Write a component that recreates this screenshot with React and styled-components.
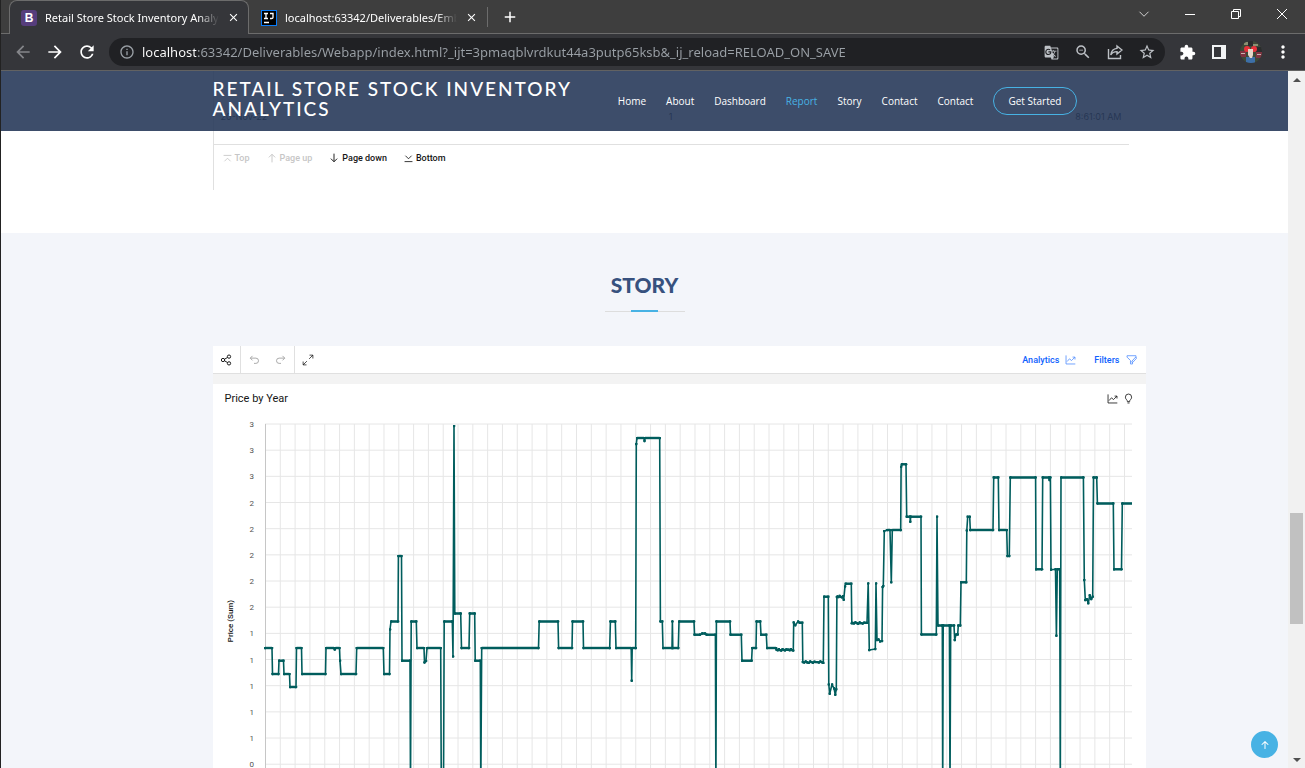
import React from "react";
import styled, { createGlobalStyle } from "styled-components";
import {
  MdArrowBack,
  MdArrowForward,
  MdRefresh,
  MdInfoOutline,
  MdGTranslate,
  MdZoomOut,
  MdStarBorder,
  MdExtension,
  MdMoreVert,
  MdClose,
  MdAdd,
} from "react-icons/md";
import { BsArrowUpShort } from "react-icons/bs";

const GlobalStyle = createGlobalStyle`
  * { box-sizing: border-box; }
  body { margin: 0; background: #fff; font-family: "Open Sans", sans-serif; }
  button { font: inherit; color: inherit; background: none; border: 0; padding: 0; }
  a { color: inherit; text-decoration: none; }
  svg { display: block; flex: none; }
`;

/* ---------- browser window ---------- */

const Window = styled.div`
  display: flex;
  flex-direction: column;
  height: 100vh;
  overflow: hidden;
  border-left: 1px solid #222;
`;

const TabStrip = styled.div`
  display: flex;
  flex: none;
  height: 34px;
  padding-left: 8px;
  background: #3e3e3e;
  box-shadow: inset 0 -1px #6c6c6c;
  color: #fff;
`;

const Tab = styled.div`
  display: flex;
  align-items: center;
  gap: 8px;
  flex: none;
  height: 34px;
  width: ${(p) => (p.$active ? 240 : 238)}px;
  padding: 0 9px 0 11px;
  border: 1px solid ${(p) => (p.$active ? "#6c6c6c" : "transparent")};
  border-bottom: 0;
  border-radius: 8px 8px 0 0;
  background: ${(p) => (p.$active ? "#35363a" : "transparent")};
`;

const TabTitle = styled.span`
  flex: 1;
  overflow: hidden;
  white-space: nowrap;
  font: 11px/16px "Noto Sans", sans-serif;
  mask-image: linear-gradient(to right, #000 88%, transparent);
`;

const BootstrapIcon = styled.span`
  width: 16px;
  height: 16px;
  border-radius: 3px;
  background: #563d7c;
  font: bold 12px/16px "Liberation Sans", sans-serif;
  text-align: center;
`;

const JetBrainsIcon = styled.span`
  width: 16px;
  height: 16px;
  border: 1px solid #087cfa;
  background: #000;
`;

const IconButton = styled.button`
  display: flex;
  align-items: center;
  justify-content: center;
  flex: none;
  width: ${(p) => p.$w || 32}px;
  color: ${(p) => p.$color || "#fff"};
`;

const TabDivider = styled.span`
  width: 1px;
  height: 20px;
  margin-top: 7px;
  background: #6c6c6c;
`;

const Spacer = styled.span`
  flex: 1;
`;

const WindowControls = styled.div`
  display: flex;
  height: 28px;
`;

const Toolbar = styled.div`
  display: flex;
  align-items: center;
  flex: none;
  height: 37px;
  padding: 0 6px;
  background: #35363a;
  border-bottom: 1px solid #626262;
`;

const Omnibox = styled.div`
  display: flex;
  align-items: center;
  flex: 1;
  height: 28px;
  margin: 0 6px;
  padding: 0 2px 0 10px;
  border-radius: 14px;
  background: #202124;
  color: #9aa0a6;
`;

const UrlInput = styled.input`
  flex: 1;
  min-width: 0;
  height: 24px;
  margin-left: 7px;
  padding: 0;
  border: 0;
  outline: 0;
  font: 13px "Noto Sans", sans-serif;
  color: transparent;
  background: linear-gradient(to right, #fff 54px, #9aa0a6 54px);
  background-clip: text;
`;

const Avatar = styled.svg`
  border-radius: 50%;
`;

/* ---------- viewport ---------- */

const Viewport = styled.div`
  display: flex;
  flex: 1;
  min-height: 0;
`;

const Page = styled.div`
  position: relative;
  flex: 1;
  overflow: hidden;
  background: #fff;
`;

const Container = styled.div`
  width: 100%;
  max-width: 864px;
  margin: 0 auto;
`;

const SiteHeader = styled.header`
  position: absolute;
  inset: 0 0 auto;
  z-index: 2;
  background: rgba(40, 58, 90, 0.9);
`;

const HeaderRow = styled(Container)`
  display: flex;
  align-items: center;
  height: 60px;
`;

const SiteName = styled.h1`
  flex: 1;
  margin: 0;
  padding-bottom: 4px;
  font: 500 19px/20px Lato, sans-serif;
  letter-spacing: 2px;
  text-transform: uppercase;
  color: #fff;
`;

const Nav = styled.nav`
  display: flex;
  align-items: center;
  gap: 20px;
  font-size: 10px;
  font-weight: 500;
  color: #fff;
`;

const NavLink = styled.a`
  color: ${(p) => (p.$active ? "#47b2e4" : "#fff")};
`;

const StartLink = styled.a`
  padding: 0 14px;
  border: 1px solid #47b2e4;
  border-radius: 14px;
  line-height: 26px;
`;

const ReportSection = styled.section`
  height: 162px;
`;

const ReportFrame = styled.div`
  height: 119px;
  margin-right: -52px;
  border-left: 1px solid #e0e0e0;
`;

const DataTable = styled.table`
  width: 100%;
  border-collapse: collapse;
  table-layout: fixed;
  border-bottom: 1px solid #e0e0e0;
  font: 9px Inter, sans-serif;
  color: #161616;

  td {
    height: 73px;
    padding: 18px 7px 0;
  }
  td:first-child {
    width: 49%;
  }
  td:last-child {
    text-align: right;
  }
`;

const Pager = styled.div`
  display: flex;
  gap: 17px;
  padding: 8px 9px;
`;

const PagerButton = styled.button`
  display: flex;
  align-items: center;
  gap: 3px;
  font: 500 9px/11px Roboto, sans-serif;
  color: #161616;

  &:disabled {
    color: #c6c6c6;
  }
`;

const StorySection = styled.section`
  padding-top: 39px;
  background: #f3f5fa;
`;

const SectionTitle = styled.h2`
  display: flex;
  flex-direction: column;
  align-items: center;
  margin: 0 0 34px;
  font: 900 21px/26px Lato, sans-serif;
  text-transform: uppercase;
  color: #37517e;

  &::after {
    content: "";
    width: 80px;
    height: 2px;
    margin-top: 12px;
    background: linear-gradient(#47b2e4, #47b2e4) center / 27px 2px no-repeat,
      linear-gradient(#ddd, #ddd) center bottom / 100% 1px no-repeat;
  }
`;

const StoryFrame = styled.div`
  margin-right: -69px;
  background: #f3f3f3;
  color: #161616;
`;

const FrameToolbar = styled.div`
  display: flex;
  height: 28px;
  margin-bottom: 10px;
  background: #fff;
  border-bottom: 1px solid #e0e0e0;
`;

const ToolGroup = styled.div`
  display: flex;
  border-right: ${(p) => (p.$last ? 0 : 1)}px solid #e0e0e0;
`;

const TextTool = styled.button`
  display: flex;
  align-items: center;
  gap: 6px;
  margin-left: 18px;
  font: 500 9px Roboto, sans-serif;
  color: #0f62fe;

  svg {
    opacity: 0.7;
  }
  &:last-child {
    margin-right: 9px;
  }
`;

const ChartCard = styled.div`
  background: #fff;
`;

const ChartHead = styled.div`
  display: flex;
  align-items: center;
  gap: 5px;
  height: 28px;
  padding: 0 12px;
`;

const ChartTitle = styled.h3`
  flex: 1;
  margin: 0;
  font: 11px Roboto, sans-serif;
`;

const BackToTop = styled.a`
  position: absolute;
  right: 10px;
  bottom: 10px;
  display: flex;
  align-items: center;
  justify-content: center;
  width: 27px;
  height: 27px;
  border-radius: 50%;
  background: #47b2e4;
  color: #fff;
`;

const ScrollBar = styled.div`
  display: flex;
  flex-direction: column;
  flex: none;
  width: 17px;
  background: #f1f1f1;
`;

const ScrollButton = styled.button`
  display: flex;
  align-items: center;
  justify-content: center;
  height: 17px;
`;

const ScrollTrack = styled.div`
  flex: ${(p) => p.$grow};
`;

const ScrollThumb = styled.div`
  flex: none;
  height: 111px;
  margin: 0 2px;
  background: #c1c1c1;
`;

/* ---------- icons ---------- */

const Line = ({ size = 12, box = 16, w = 1, children, ...rest }) => (
  <svg width={size} height={size} viewBox={`0 0 ${box} ${box}`} fill="none" stroke="currentColor" strokeWidth={w} aria-hidden="true" {...rest}>
    {children}
  </svg>
);

const SharePageIcon = () => (
  <Line size={16} w={1.4}>
    <path d="M1.5 5v9.5h12V11" />
    <path d="M10 2l5 4-5 4V7.600C7 7.600 5 8.500 3.800 11 4.200 7.500 6 4.800 10 4.400z" />
  </Line>
);

const SidePanelIcon = () => (
  <svg width="14" height="14" viewBox="0 0 14 14" aria-hidden="true">
    <path fill="#f1f3f4" fillRule="evenodd" d="M0 0h14v14H0zM2 2v10h7V2z" />
  </svg>
);

const ShareNodesIcon = () => (
  <Line w={1.3}>
    <circle cx="12" cy="3.500" r="2.200" />
    <circle cx="4" cy="8" r="2.200" />
    <circle cx="12" cy="12.500" r="2.200" />
    <path d="M6 7l4-2.400M6 9l4 2.400" />
  </Line>
);

const UndoIcon = ({ flip }) => (
  <Line w={1.3} transform={flip ? "scale(-1 1)" : undefined}>
    <path d="M6 2.500L3 5.500l3 3M3 5.500h7.500a3.500 3.500 0 010 7H8" />
  </Line>
);

const ExpandIcon = () => (
  <Line>
    <path d="M10 1.500h4.500V6M14.500 1.500l-5 5M1.500 10v4.500H6M1.500 14.500l5-5" />
  </Line>
);

const TrendIcon = () => (
  <Line size={11} w={1.2}>
    <path d="M1.500 2v12.500H15" />
    <path d="M3 11l3.500-4 3 2.500 5-5M11 4.500h3.500V8" />
  </Line>
);

const FilterIcon = () => (
  <Line size={11} w={1.2}>
    <path d="M14.500 5.500V2.500h-13v2l5 5v5h3v-3" />
    <path d="M8.500 10.500l5.500-6 1.500 1.500-5.500 6H8.500z" />
  </Line>
);

const BulbIcon = () => (
  <Line size={11} w={1.2}>
    <path d="M6 12V10.500C5 9.500 3.500 8.500 3.500 6a4.500 4.500 0 019 0c0 2.500-1.500 3.500-2.500 4.500V12M6 12.500h4M6.500 14.500h3" />
  </Line>
);

const pagerIcons = {
  top: "M1 2.500h14M2.500 13L8 7.500l5.500 5.500",
  up: "M8 15V2M3 7l5-5 5 5",
  down: "M8 1v13M3 9l5 5 5-5",
  bottom: "M1 13.500h14M2.500 3L8 8.500 13.500 3",
};

/* ---------- chart ---------- */

const BOTTOM = 790;

const jitter = (x1, x2, y, steps) => {
  const offsets = [0, 0.600, -0.600, 0.300, 0.900, -0.500, 0.200, 0.700, -0.300, 0];
  return Array.from({ length: steps + 1 }, (_, i) => [
    x1 + ((x2 - x1) * i) / steps,
    y + offsets[i % offsets.length],
  ]);
};

const priceLine = [
  [265, 648], [272, 648], [272.5, 674], [278.5, 674], [279, 660.7], [283.500, 660.7], [284, 674], [289.500, 674],
  [290, 687], [296, 687], [296.5, 648], [301.5, 648], [302, 674], [325.5, 674], [326, 648], [334, 648],
  [334.700, 649.5], [335.500, 648], [339.500, 648], [340, 660.7], [341, 674], [356, 674], [356.700, 648],
  [383.300, 648], [384, 674], [389.500, 674], [390, 629.500], [391, 621.500], [398, 621.500], [398.400, 556],
  [401.500, 556], [402, 660.700], [410, 660.700], [410.500, BOTTOM], [411.200, 621.500], [416.300, 621.500],
  [417, 648], [424, 648], [424.500, 662.500], [426, 661], [427, 648], [440.700, 648], [441.300, BOTTOM],
  [443.500, BOTTOM], [444.200, 621.500], [452.300, 621.500], [453, 656.500], [454, 426], [454.800, 613.500],
  [460.700, 613.500], [461.500, 648], [469, 648], [469.700, 613.500], [474.700, 613.500], [475.200, 660.700],
  [480.300, 660.700], [480.800, BOTTOM], [481.700, 648], [538.500, 648], [539.200, 621.500], [558, 621.500],
  [558.600, 648], [572, 648], [572.500, 621.500], [583, 621.500], [583.500, 648], [609.700, 648],
  [610.400, 621.500], [615.300, 621.500], [616, 648], [631.200, 648], [631.700, 680.700], [632.200, 648],
  [635.700, 648], [636.300, 444], [637, 438], [644, 438], [644.500, 441], [645, 438], [659.700, 438],
  [660.400, 621.500], [662.300, 621.500], [663, 648], [672, 648], [672.400, 621.500], [672.800, 648],
  [678.300, 648], [679, 621.500], [694, 621.500], [694.500, 634.700], [700, 634.700], [702, 633.500],
  [705, 633.500], [706.500, 634.700], [715.400, 634.700], [715.900, BOTTOM], [716.400, 621.500], [730, 621.500],
  [730.500, 634.700], [741.300, 634.700], [742, 660.700], [751.600, 660.700], [752.200, 648], [756, 648],
  [756.500, 621.500], [760.300, 621.500], [761, 634.700], [766.300, 634.700], [767, 648], [776, 648],
  ...jitter(776.500, 793.300, 649.700, 14),
  [793.700, 622.500], [795.300, 625.300], [798, 621.500], [799.500, 622.700], [802.300, 622.700],
  ...jitter(802.800, 823.300, 662, 14),
  [824, 596.700], [828.300, 596.700], [828.800, 684.500], [829.700, 693.700], [832, 684.500], [834, 688.300],
  [835.300, 694.700], [836.300, 689.300], [836.900, 597],
  ...jitter(837.500, 843, 596.500, 5),
  [843.700, 599.700], [845, 586.500], [845.700, 583.700], [851.300, 583.700], [851.800, 623.300],
  ...jitter(852.500, 867, 622.900, 10),
  [868.200, 583.500], [869.300, 650], [875.300, 649], [876, 583.500], [877, 640], [878.500, 639.500],
  [880, 641.500], [882, 641], [882.600, 587], [883.300, 586], [884.300, 531], [887, 530], [890, 530],
  [891.300, 582.300], [892.300, 530], [900.700, 530], [901.100, 466.700], [901.900, 464.300], [906, 464.300],
  [906.700, 516.700], [910, 516.700], [910.300, 521.700], [910.700, 516.700], [921, 516.700], [921.400, 634.500],
  [936.300, 634.500], [937, 516.700], [938, 625.500], [942.300, 625.500], [942.700, BOTTOM], [943.200, 625.500],
  [949.400, 625.500], [950, BOTTOM], [950.700, 625.500], [954, 625.500], [954.700, 640], [956, 634.500],
  [957.700, 634.500], [958.300, 625.500], [960.300, 625.500], [961, 582.300], [966.300, 582.300],
  [966.800, 530.500], [967.700, 516.700], [969.700, 516.700], [970.300, 530], [993, 530], [993.700, 477.500],
  [998.300, 477.500], [999, 530], [1006.700, 530], [1007.400, 556], [1009.300, 556], [1010.300, 477.500],
  [1035.600, 477.500], [1036, 569.300], [1042, 569.300], [1042.700, 477.500], [1049, 477.500], [1049.500, 480],
  [1050.400, 477.500], [1051, 569.700], [1055.500, 569.300], [1056.400, 635.700], [1057.300, 569.300],
  [1059.700, 569.300], [1060.300, BOTTOM], [1061, 477.500], [1083.400, 477.500], [1084.300, 580],
  [1085.300, 600], [1087, 599.300], [1088.300, 603.300], [1089.700, 595.300], [1091.300, 599],
  [1092.700, 596.700], [1093.500, 477.500], [1096.700, 477.500], [1097.400, 503.500], [1113.300, 503.500],
  [1114, 569.300], [1121.500, 569.300], [1122.300, 503.500], [1132, 503.500],
];

const yLabels = [3, 3, 3, 2, 2, 2, 2, 2, 1, 1, 1, 1, 1, 0];

const PriceChart = () => {
  const points = priceLine.map((p) => p.join(",")).join(" ");
  return (
    <svg width="100%" viewBox="213 412 933 370" role="img" aria-label="Price (Sum) by Year">
      {yLabels.map((label, i) => {
        const y = 424 + i * 26.170;
        return (
          <g key={i}>
            <path d={`M265 ${y}H1132`} stroke="#e6e6e6" />
            <text x="254" y={y + 3} textAnchor="end" fontSize="8" fontFamily="Roboto, sans-serif" fill="#525252">
              {label}
            </text>
          </g>
        );
      })}
      {Array.from({ length: 58 }, (_, i) => (
        <path key={i} d={`M${265.500 + (i + 1) * 14.810} 424V782`} stroke="#e6e6e6" />
      ))}
      <path d="M265.500 424V782" stroke="#c6c6c6" />
      <text transform="translate(233 621) rotate(-90)" textAnchor="middle" fontSize="8" fontWeight="500" fontFamily="Roboto, sans-serif" fill="#161616">
        Price (Sum)
      </text>
      <defs>
        <marker id="dot" markerWidth="3" markerHeight="3" refX="1.500" refY="1.500" markerUnits="userSpaceOnUse">
          <circle cx="1.500" cy="1.500" r="1.400" fill="#005d5d" />
        </marker>
      </defs>
      <polyline points={points} fill="none" stroke="#005d5d" strokeWidth="1.600" strokeLinejoin="round" markerStart="url(#dot)" markerMid="url(#dot)" />
      {priceLine.slice(1).map(([x, y], i) => {
        const [px, py] = priceLine[i];
        return py === y && x - px > 2 && y < BOTTOM ? (
          <path key={i} d={`M${px} ${y}H${x}`} stroke="#005d5d" strokeWidth="2.400" />
        ) : null;
      })}
    </svg>
  );
};

/* ---------- page ---------- */

const navItems = ["Home", "About", "Dashboard", "Report", "Story", "Contact", "Contact"];

export default function App() {
  return (
    <>
      <GlobalStyle />
      <Window>
        <TabStrip>
          <Tab $active>
            <BootstrapIcon>B</BootstrapIcon>
            <TabTitle>Retail Store Stock Inventory Analy</TabTitle>
            <IconButton $w={12} aria-label="Close tab"><MdClose size={13} /></IconButton>
          </Tab>
          <Tab>
            <JetBrainsIcon>
              <svg width="14" height="14" viewBox="0 0 14 14" fill="none" stroke="#fff" strokeWidth="1.300" aria-hidden="true">
                <path d="M2 2.500h4M4 2.500v5M2 7.500h4M8 2.500h3v4q0 1-1.500 1H8M2 11.500h5" />
              </svg>
            </JetBrainsIcon>
            <TabTitle>localhost:63342/Deliverables/Emb</TabTitle>
            <IconButton $w={12} aria-label="Close tab"><MdClose size={13} /></IconButton>
          </Tab>
          <TabDivider />
          <IconButton $w={44} aria-label="New tab"><MdAdd size={18} /></IconButton>
          <Spacer />
          <WindowControls>
            <IconButton $w={46} aria-label="Search tabs">
              <Line><path d="M2 5l6 6 6-6" /></Line>
            </IconButton>
            <IconButton $w={46} aria-label="Minimize">
              <Line size={10} box={10}><path d="M0 5.500h10" /></Line>
            </IconButton>
            <IconButton $w={46} aria-label="Restore">
              <Line size={10} box={10}><path d="M.5 2.500h7v7h-7zM2.500 2.500v-2h7v7h-2" /></Line>
            </IconButton>
            <IconButton $w={46} aria-label="Close">
              <Line size={10} box={10}><path d="M0 0l10 10M10 0L0 10" /></Line>
            </IconButton>
          </WindowControls>
        </TabStrip>

        <Toolbar>
          <IconButton $color="#85868a" aria-label="Back"><MdArrowBack size={20} /></IconButton>
          <IconButton aria-label="Forward"><MdArrowForward size={20} /></IconButton>
          <IconButton aria-label="Reload"><MdRefresh size={20} /></IconButton>
          <Omnibox>
            <MdInfoOutline size={16} />
            <UrlInput
              aria-label="Address"
              readOnly
              value="localhost:63342/Deliverables/Webapp/index.html?_ijt=3pmaqblvrdkut44a3putp65ksb&_ij_reload=RELOAD_ON_SAVE"
            />
            <IconButton $color="#bdc1c6" aria-label="Translate"><MdGTranslate size={15} /></IconButton>
            <IconButton $color="#bdc1c6" aria-label="Zoom"><MdZoomOut size={18} /></IconButton>
            <IconButton $color="#bdc1c6" aria-label="Share"><SharePageIcon /></IconButton>
            <IconButton $color="#bdc1c6" aria-label="Bookmark"><MdStarBorder size={18} /></IconButton>
          </Omnibox>
          <IconButton aria-label="Extensions"><MdExtension size={17} /></IconButton>
          <IconButton aria-label="Side panel"><SidePanelIcon /></IconButton>
          <IconButton aria-label="Profile">
            <Avatar width="22" height="22" viewBox="0 0 22 22" aria-hidden="true">
              <path fill="#3d4a38" d="M0 0h22v22H0z" />
              <path fill="#8a8f72" d="M4 1h4v3H4zM13 3h5v2h-5z" />
              <path fill="#2b2c2e" d="M8 0h5v5H8zM16 6h6v5h-6z" />
              <path fill="#7e3340" d="M0 10h6v6H0zM16 11h6v6h-6z" />
              <path fill="#c8b3b0" d="M1 12h4v1H1zM17 13h4v1h-4z" />
              <circle cx="7" cy="8" r="3" fill="#e8313a" />
              <circle cx="14" cy="8" r="3" fill="#e8313a" />
              <path fill="#3d6fa8" d="M6 16h9v6H6z" />
              <path fill="#e5d6c9" d="M8 8h5v6l-1 3h-2l-2-3z" />
            </Avatar>
          </IconButton>
          <IconButton aria-label="Menu"><MdMoreVert size={20} /></IconButton>
        </Toolbar>

        <Viewport>
          <Page>
            <SiteHeader>
              <HeaderRow>
                <SiteName>Retail Store Stock Inventory Analytics</SiteName>
                <Nav>
                  {navItems.map((item, i) => (
                    <NavLink key={i} href="#" $active={item === "Report"}>{item}</NavLink>
                  ))}
                  <StartLink href="#">Get Started</StartLink>
                </Nav>
              </HeaderRow>
            </SiteHeader>

            <ReportSection>
              <Container>
                <ReportFrame>
                  <DataTable>
                    <tbody>
                      <tr>
                        <td>20-Nov-22</td>
                        <td>1</td>
                        <td>8:61:01 AM</td>
                      </tr>
                    </tbody>
                  </DataTable>
                  <Pager>
                    <PagerButton disabled><Line size={9} w={1.500}><path d={pagerIcons.top} /></Line>Top</PagerButton>
                    <PagerButton disabled><Line size={10} w={1.500}><path d={pagerIcons.up} /></Line>Page up</PagerButton>
                    <PagerButton><Line size={10} w={1.500}><path d={pagerIcons.down} /></Line>Page down</PagerButton>
                    <PagerButton><Line size={9} w={1.500}><path d={pagerIcons.bottom} /></Line>Bottom</PagerButton>
                  </Pager>
                </ReportFrame>
              </Container>
            </ReportSection>

            <StorySection>
              <Container>
                <SectionTitle>Story</SectionTitle>
                <StoryFrame>
                  <FrameToolbar>
                    <ToolGroup>
                      <IconButton $w={27} $color="#161616" aria-label="Share"><ShareNodesIcon /></IconButton>
                    </ToolGroup>
                    <ToolGroup>
                      <IconButton $w={27} $color="#a8a8a8" aria-label="Undo"><UndoIcon /></IconButton>
                      <IconButton $w={26} $color="#a8a8a8" aria-label="Redo"><UndoIcon flip /></IconButton>
                    </ToolGroup>
                    <ToolGroup $last>
                      <IconButton $w={27} $color="#161616" aria-label="Full screen"><ExpandIcon /></IconButton>
                    </ToolGroup>
                    <Spacer />
                    <TextTool>Analytics<TrendIcon /></TextTool>
                    <TextTool>Filters<FilterIcon /></TextTool>
                  </FrameToolbar>
                  <ChartCard>
                    <ChartHead>
                      <ChartTitle>Price by Year</ChartTitle>
                      <TrendIcon />
                      <BulbIcon />
                    </ChartHead>
                    <PriceChart />
                  </ChartCard>
                </StoryFrame>
              </Container>
            </StorySection>
            <BackToTop href="#" aria-label="Back to top"><BsArrowUpShort size={16} /></BackToTop>
          </Page>

          <ScrollBar>
            <ScrollButton aria-label="Scroll up">
              <svg width="8" height="4" viewBox="0 0 8 4"><path d="M0 4l4-4 4 4z" fill="#505050" /></svg>
            </ScrollButton>
            <ScrollTrack $grow={425} />
            <ScrollThumb />
            <ScrollTrack $grow={127} />
            <ScrollButton aria-label="Scroll down">
              <svg width="8" height="4" viewBox="0 0 8 4"><path d="M0 0h8L4 4z" fill="#505050" /></svg>
            </ScrollButton>
          </ScrollBar>
        </Viewport>
      </Window>
    </>
  );
}
